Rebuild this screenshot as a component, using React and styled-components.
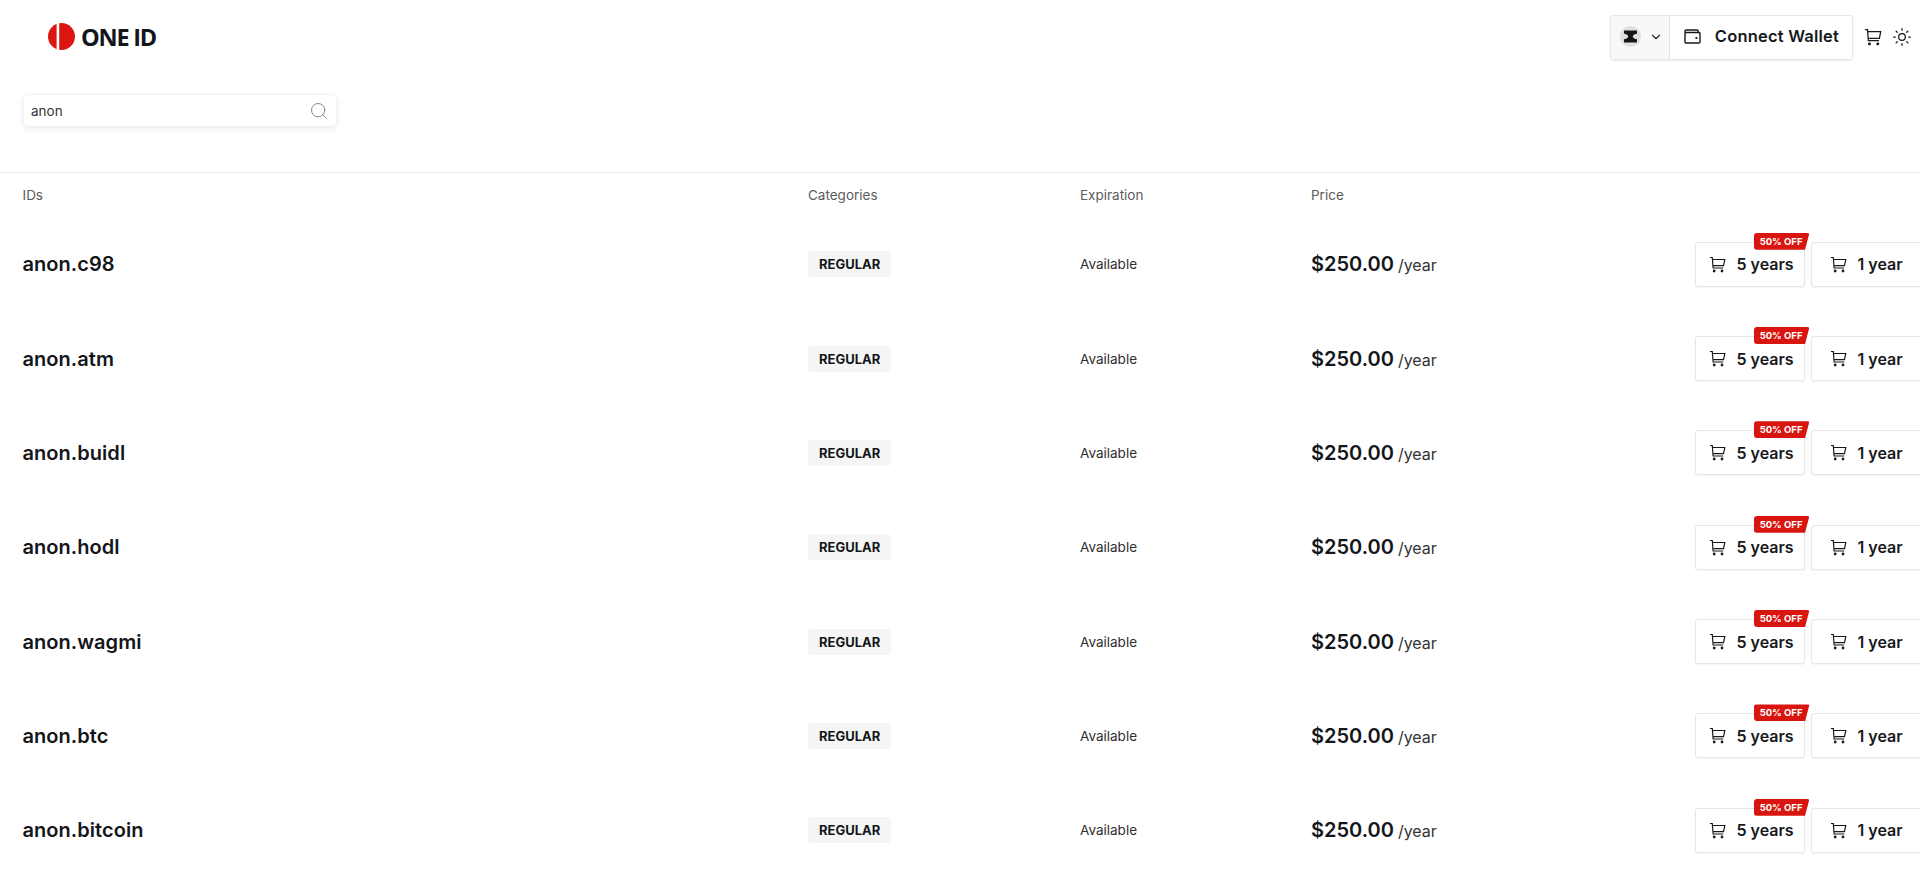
import React from "react";
import styled, { createGlobalStyle } from "styled-components";
import { ChevronDown, Search, Sun } from "lucide-react";

const Global = createGlobalStyle`
  html, body { margin: 0; padding: 0; background: #fff; overflow: hidden; height: 100%; }
  body { font-family: Inter, "Liberation Sans", sans-serif; color: #111; }
  #root { width: 1920px; height: 881px; overflow: hidden; }
`;

const Header = styled.header`
  display: flex; align-items: flex-start; justify-content: space-between;
  height: 94px; padding: 15px 8px 0 48px; box-sizing: border-box;
`;
const Logo = styled.div`
  display: flex; align-items: center; gap: 6px; height: 43px;
  font: 700 23.500px "Open Sans", sans-serif; letter-spacing: -1.2px; color: #14161a;
`;
const Right = styled.div`display: flex; align-items: center; gap: 10px;`;
const WalletGroup = styled.div`
  display: flex; height: 43px; margin-right: 1px; border: 1px solid #e6e6e6; border-radius: 3px;
  box-shadow: 0 1px 2px rgba(0,0,0,.08); overflow: hidden;
`;
const ChainPicker = styled.div`
  display: flex; align-items: center; gap: 8px; width: 59px; padding: 0 0 2px 9px; box-sizing: border-box;
  background: #f8f8f8; border-right: 1px solid #e6e6e6;
`;
const ChainBadge = styled.span`
  width: 21px; height: 21px; border-radius: 50%; background: #dfdfdc;
  display: flex; align-items: center; justify-content: center;
`;
const ConnectBtn = styled.div`
  display: flex; align-items: center; gap: 14px; padding: 0 13px 3px 14px;
  font-size: 16.500px; font-weight: 600; letter-spacing: .2px; color: #16181c;
`;
const IconSlot = styled.span`display: flex; color: #16181c; margin-top: -2px;`;

const SearchSection = styled.section`
  height: 79px; padding-left: 23px; box-sizing: border-box; border-bottom: 1px solid #ececec;
`;
const SearchBox = styled.div`
  width: 314px; height: 33px; box-sizing: border-box; padding: 0 7px 0 7px;
  display: flex; align-items: center; justify-content: space-between;
  border: 1px solid #f1f1f1; border-radius: 5px; box-shadow: 0 2px 6px rgba(0,0,0,.07);
  font-size: 13.500px; color: #333; background: #fff;
`;

const Row = styled.div`
  display: grid; grid-template-columns: 785.500px 272px 231px 383.500px auto; align-items: center;
  padding-left: 22.500px; height: 94.350px; box-sizing: border-box;
`;
const HeadRow = styled(Row)`height: 44px;`;
const Head = styled.div`font-size: 13.500px; color: #5c5c5c;`;
const Name = styled.div`font-size: 20px; font-weight: 600; color: #14161a; letter-spacing: .05px;`;
const Tag = styled.span`
  display: inline-block; padding: 0 11px; height: 26px; line-height: 26px; border-radius: 4px;
  background: #f5f5f5; font-size: 13px; font-weight: 700; color: #14161a;
`;
const Status = styled.div`font-size: 13.500px; color: #2e2e2e;`;
const Price = styled.div`
  display: flex; align-items: baseline; gap: 4px; white-space: nowrap;
  font-size: 20px; font-weight: 600; color: #14161a;
`;
const Per = styled.span`font-size: 16px; font-weight: 400; color: #333;`;
const Actions = styled.div`display: flex; gap: 6px; width: 240px;`;
const BuyBtn = styled.div`
  position: relative; flex: none; width: ${p => p.$w}px; height: 45px; box-sizing: border-box;
  display: flex; align-items: center; gap: 11px; padding-left: ${p => p.$pad}px;
  border: 1px solid #e6e6e6; border-radius: 3px; box-shadow: 0 1px 2px rgba(0,0,0,.05);
  font-size: 16px; font-weight: 600; color: #16181c; background: #fff;
`;
const Off = styled.span`
  position: absolute; top: -10px; right: -6px; height: 17px; padding: 0 7px 0 6px;
  display: flex; align-items: center;
  font-size: 9.500px; font-weight: 700; color: #fff; white-space: nowrap;
  background: #d8150f; border-radius: 3px;
  clip-path: polygon(0 0, 100% 0, 92% 100%, 0 100%);
`;

const LogoMark = () => (
  <svg width="27" height="27" viewBox="0 0 27 27">
    <circle cx="13.500" cy="13.500" r="13.500" fill="#dc1711" />
    <rect x="8.600" y="0" width="2.600" height="27" fill="#fff" />
  </svg>
);
const ChainMark = () => (
  <svg width="13" height="13" viewBox="0 0 15 14" fill="#14161a">
    <path d="M0 0h15v3.800c-2.700.2-4.300 1.400-5 3.200.7 1.800 2.300 3 5 3.200V14H0v-3.800c2.700-.2 4.300-1.400 5-3.200-.7-1.800-2.300-3-5-3.200z" />
  </svg>
);
const WalletIcon = () => (
  <svg width="17" height="15" viewBox="0 0 17 15" fill="none" stroke="#16181c" strokeWidth="1.400">
    <path d="M1 3.500V2.400C1 1.500 1.500 1 2.400 1h10.800c.6 0 1 .4 1 1v1.500" />
    <rect x="1" y="3.500" width="15" height="10.500" rx="1" />
    <path d="M11.500 9h1.800" strokeWidth="1.800" />
  </svg>
);
const CartIcon = ({ size = 17 }) => (
  <svg width={size} height={size} viewBox="0 0 17 17" fill="none" stroke="#16181c" strokeWidth="1.200">
    <path d="M1 1.500h2.300l.8 10.500h10.100" />
    <path d="M3.500 3.500H15.800l-1.300 6.200H4.100" />
    <circle cx="5.200" cy="15" r=".8" fill="#16181c" />
    <circle cx="13" cy="15" r=".8" fill="#16181c" />
  </svg>
);

const names = ["anon.c98", "anon.atm", "anon.buidl", "anon.hodl", "anon.wagmi", "anon.btc", "anon.bitcoin"];

export default function App() {
  return (
    <>
      <Global />
      <Header>
        <Logo><LogoMark />ONE ID</Logo>
        <Right>
          <WalletGroup>
            <ChainPicker>
              <ChainBadge><ChainMark /></ChainBadge>
              <ChevronDown size={14} strokeWidth={2} color="#222" />
            </ChainPicker>
            <ConnectBtn><WalletIcon />Connect Wallet</ConnectBtn>
          </WalletGroup>
          <IconSlot><CartIcon size={18} /></IconSlot>
          <IconSlot><Sun size={20} strokeWidth={1.500} /></IconSlot>
        </Right>
      </Header>
      <SearchSection>
        <SearchBox>anon<Search size={20} strokeWidth={1.200} color="#8a8a8a" /></SearchBox>
      </SearchSection>
      <HeadRow>
        <Head>IDs</Head><Head>Categories</Head><Head>Expiration</Head><Head>Price</Head>
      </HeadRow>
      {names.map(n => (
        <Row key={n}>
          <Name>{n}</Name>
          <div><Tag>REGULAR</Tag></div>
          <Status>Available</Status>
          <Price>$250.00 <Per>/year</Per></Price>
          <Actions>
            <BuyBtn $w={110} $pad={13}><CartIcon />5 years<Off>50% OFF</Off></BuyBtn>
            <BuyBtn $w={125} $pad={18}><CartIcon />1 year</BuyBtn>
          </Actions>
        </Row>
      ))}
    </>
  );
}
